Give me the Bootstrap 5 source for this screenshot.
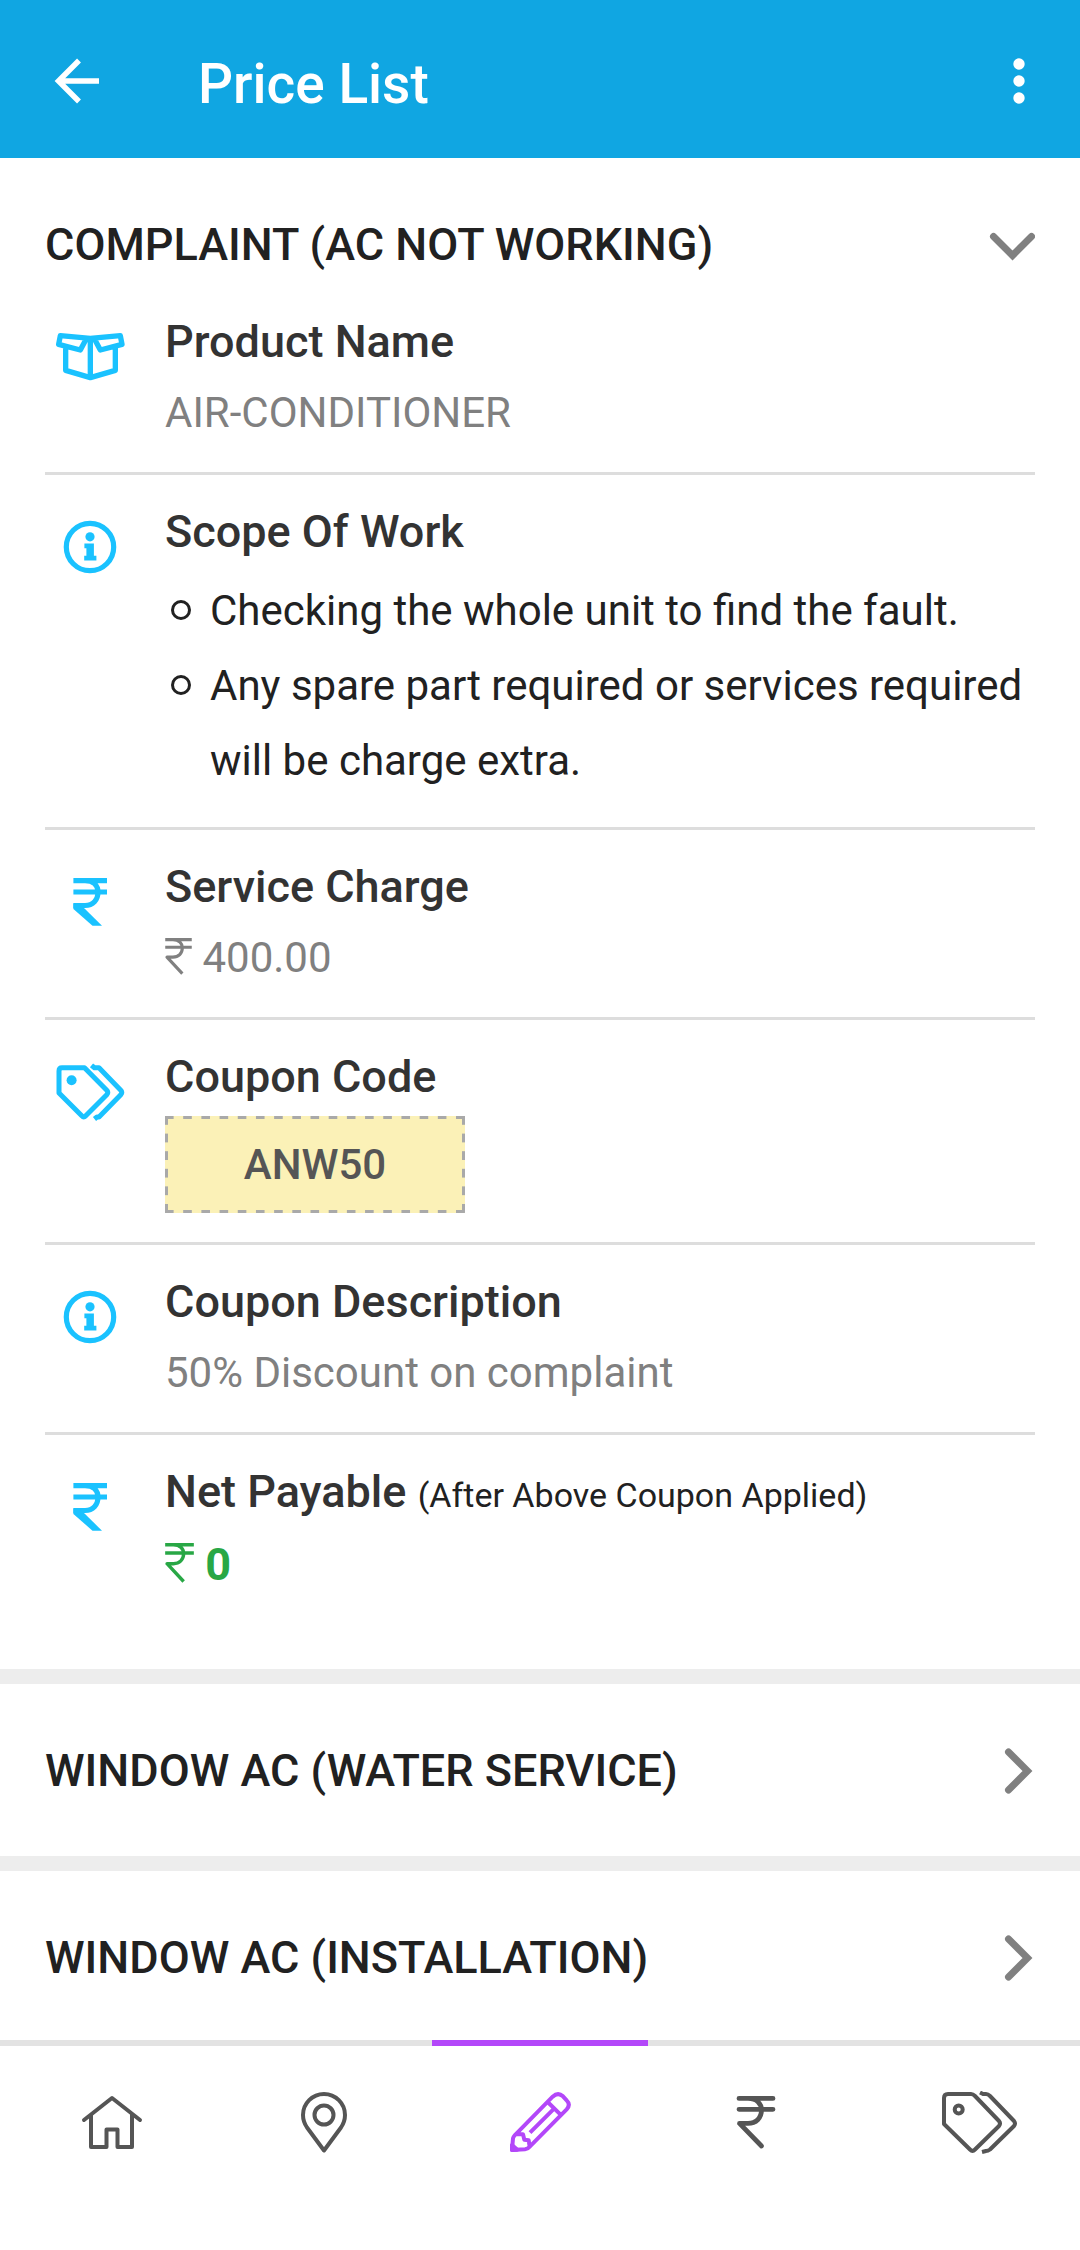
<!DOCTYPE html>
<html lang="en">
<head>
<meta charset="utf-8">
<meta name="viewport" content="width=device-width, initial-scale=1">
<title>Price List</title>
<link href="https://cdn.jsdelivr.net/npm/bootstrap@5.3.0/dist/css/bootstrap.min.css" rel="stylesheet">
<style>
body{font-family:Roboto,"Noto Sans",sans-serif;color:#212121;background:#fff;font-size:42px;line-height:60px;padding-bottom:200px}
svg{fill:none;stroke:currentColor;display:block;flex:none}
.app-bar{background:#10a6e2;height:158px;padding:4px 45px 0}
.app-bar h1{font-size:55px;line-height:64px;font-weight:500;padding:6px 0 0 90px}
.plain-btn{background:none;border:0;padding:0;color:inherit}
.price-group+.price-group{border-top:15px solid #ededed}
.group-toggle{font-size:45px;line-height:54px;font-weight:500;padding:60px 45px 58px}
.group-toggle[aria-expanded=true]{padding-bottom:13px}
.group-toggle svg{color:#808080}
.group-body{padding:0 45px 46px}
.detail{gap:30px;padding:30px 0 29px}
.detail+.detail{border-top:3px solid #ddd}
.detail>svg{color:#1ac2ff}
.detail h3{font-size:45px;line-height:54px;font-weight:500;color:#333;margin:0 0 14px}
.detail h3 span{font-size:34px;font-weight:400;color:#212121}
.detail p{margin:0;color:#808080}
.detail .net-total{font-size:45px;line-height:58px;font-weight:700;color:#28a745}
.detail p svg{display:inline;vertical-align:-3px}
.scope-list{list-style:none;padding:0;margin:0;line-height:75px}
.scope-list li{display:flex;gap:19px}
.scope-list li::before{content:"";flex:none;width:20px;height:20px;border:3px solid #212121;border-radius:50%;margin:27px 0 0 6px}
.detail .h-coupon{margin-bottom:12px}
.coupon-code{
  --dash:#a9a9a9;
  width:300px;height:97px;color:#555;font-weight:500;
  background:
    linear-gradient(90deg,var(--dash) 9px,transparent 9px) left top/calc((100% - 9px)/16) 3px repeat-x,
    linear-gradient(90deg,var(--dash) 9px,transparent 9px) left bottom/calc((100% - 9px)/16) 3px repeat-x,
    linear-gradient(var(--dash) 9px,transparent 9px) left top/3px calc((100% - 9px)/5) repeat-y,
    linear-gradient(var(--dash) 9px,transparent 9px) right top/3px calc((100% - 9px)/5) repeat-y,
    #fbf1b7;
}
.tab-bar{background:#fff;height:210px}
.tab-bar a{border-top:6px solid #e3e3e3;color:#555;padding-top:45px}
.tab-bar a.active{border-color:#b347f9;color:#b347f9}
</style>
</head>
<body>
<svg class="d-none" aria-hidden="true">
  <symbol id="i-info" viewBox="0 0 90 84"><circle cx="45" cy="42" r="23.7" stroke-width="5.2"/><circle cx="45" cy="31.8" r="4.6" fill="currentColor" stroke="none"/><path d="M39.4 38.6H48.9V50.7H51.4V55.4H39.2V50.7H41.4V43.3H39.4Z" fill="currentColor" stroke="none"/></symbol>
  <symbol id="i-rupee-bold" viewBox="0 0 90 84"><path d="M28.4 20.6H62M28.4 32H62M34 20.6H40C49 20.6 53 26 53 32C53 40 48 45.5 40 45.5H28.4" stroke-width="5.2"/><path d="M28.4 43.5V49L47.5 65.7H57L37 46Z" fill="currentColor" stroke="none"/></symbol>
  <symbol id="i-rupee" viewBox="0 0 38 53"><path d="M0 2.4H38M0 13.3H38M6 2.4H11C20 2.4 24.5 8 24.5 14C24.5 22 19 27.4 11 27.4H2.5L24.5 51" stroke-width="4.5" stroke-linejoin="round"/></symbol>
</svg>

<header class="app-bar d-flex align-items-center text-white">
  <button class="plain-btn" type="button" aria-label="Back"><svg width="63" height="50" viewBox="0 0 63 50"><path d="M34 4.500L13.500 25L34 45.500M13.500 25H54" stroke-width="5.500"/></svg></button>
  <h1 class="m-0 flex-grow-1">Price List</h1>
  <button class="plain-btn" type="button" aria-label="More options"><svg width="34" height="50" viewBox="0 0 34 50"><g fill="currentColor" stroke="none"><circle cx="18" cy="8" r="5.700"/><circle cx="18" cy="25" r="5.700"/><circle cx="18" cy="42" r="5.700"/></g></svg></button>
</header>

<main>
  <section class="price-group">
    <button class="plain-btn group-toggle w-100 d-flex justify-content-between align-items-center text-start" type="button" data-bs-toggle="collapse" data-bs-target="#complaint" aria-expanded="true" aria-controls="complaint">COMPLAINT (AC NOT WORKING)
      <svg width="46" height="46" viewBox="0 0 46 46"><path d="M4.500 14.500L23.500 33.500L42.500 14.500" stroke-width="7" stroke-linecap="round"/></svg></button>
    <div class="collapse show" id="complaint">
      <div class="group-body">
        <div class="detail d-flex align-items-start">
          <svg width="90" height="84" viewBox="0 0 90 84"><g transform="translate(5 15) scale(.33333)" stroke-width="16" stroke-linejoin="round"><path d="M121 25L31 17L26 43L91 60L109 26M121 25L211 17L216 43L151 60L133 26M121 25V143M47 50V121L121 143L196 121V50"/></g></svg>
          <div><h3>Product Name</h3><p>AIR-CONDITIONER</p></div>
        </div>
        <div class="detail d-flex align-items-start">
          <svg width="90" height="84"><use href="#i-info"/></svg>
          <div><h3>Scope Of Work</h3>
            <ul class="scope-list"><li>Checking the whole unit to find the fault.</li><li>Any spare part required or services required will be charge extra.</li></ul></div>
        </div>
        <div class="detail d-flex align-items-start">
          <svg width="90" height="84"><use href="#i-rupee-bold"/></svg>
          <div><h3>Service Charge</h3><p><svg width="27" height="37"><use href="#i-rupee"/></svg> 400.00</p></div>
        </div>
        <div class="detail d-flex align-items-start">
          <svg width="90" height="84" viewBox="0 0 90 84"><g stroke-width="5" stroke-linejoin="round"><path d="M17 17.800H39.500L62 40.500Q63.500 42.700 62 44.500L40.500 66Q38.700 68 37 66L14 43V21Q14 17.800 17 17.800Z"/><path d="M46.500 15.400L49.500 17.800H54L76 40.500Q77.500 42.700 76 44.500L54 67H52L49.500 69"/></g><circle cx="26.600" cy="30.300" r="5" fill="currentColor" stroke="none"/></svg>
          <div><h3 class="h-coupon">Coupon Code</h3><div class="coupon-code d-flex align-items-center justify-content-center">ANW50</div></div>
        </div>
        <div class="detail d-flex align-items-start">
          <svg width="90" height="84"><use href="#i-info"/></svg>
          <div><h3>Coupon Description</h3><p>50% Discount on complaint</p></div>
        </div>
        <div class="detail d-flex align-items-start">
          <svg width="90" height="84"><use href="#i-rupee-bold"/></svg>
          <div><h3>Net Payable <span>(After Above Coupon Applied)</span></h3><p class="net-total"><svg width="29" height="40"><use href="#i-rupee"/></svg> 0</p></div>
        </div>
      </div>
    </div>
  </section>
  <section class="price-group">
    <button class="plain-btn group-toggle w-100 d-flex justify-content-between align-items-center text-start" type="button" aria-expanded="false">WINDOW AC (WATER SERVICE)
      <svg width="46" height="46" viewBox="0 0 46 46"><path d="M19.500 4L38.500 23L19.500 42" stroke-width="7" stroke-linecap="round"/></svg></button>
  </section>
  <section class="price-group">
    <button class="plain-btn group-toggle w-100 d-flex justify-content-between align-items-center text-start" type="button" aria-expanded="false">WINDOW AC (INSTALLATION)
      <svg width="46" height="46" viewBox="0 0 46 46"><path d="M19.500 4L38.500 23L19.500 42" stroke-width="7" stroke-linecap="round"/></svg></button>
  </section>
</main>

<nav class="tab-bar fixed-bottom d-flex align-items-start" aria-label="Main">
  <a href="#" class="flex-fill d-flex justify-content-center" aria-label="Home"><svg width="100" height="64" viewBox="0 0 100 64"><path d="M26 29L54 7L82 29M33 24V56H48.500V38.500H59.500V56H74V24" stroke-width="4" stroke-linecap="round" stroke-linejoin="round"/></svg></a>
  <a href="#" class="flex-fill d-flex justify-content-center" aria-label="Location"><svg width="100" height="64" viewBox="0 0 100 64"><g stroke-width="4" stroke-linejoin="round"><path d="M50 59.500L33 36.500C30 32 29 28 29 24A21 21 0 0 1 71 24C71 28 70 32 67 36.500Z"/><circle cx="50" cy="24" r="9.500"/></g></svg></a>
  <a href="#" class="active flex-fill d-flex justify-content-center" aria-label="Price list" aria-current="page"><svg width="100" height="64" viewBox="0 0 100 64"><g transform="translate(0 -21) scale(.33333)" stroke-width="12" stroke-linejoin="round"><path d="M66 240L69 205Q70 200 74 196L188 80Q204 65 219 79L230 91Q243 104 230 118L120 229Q113 237 105 238ZM173 96L214 136M190 118L120 188M78 193H99L103 209L116 211L119 230"/><path d="M66 225V240L82 239Z" fill="currentColor"/></g></svg></a>
  <a href="#" class="flex-fill d-flex justify-content-center" aria-label="Payments"><svg width="100" height="64" viewBox="-31 -5 100 64"><path d="M2 2.400H36M2 13.300H36M6 2.400H11C20 2.400 24.500 8 24.500 14C24.500 22 19 27.400 11 27.400H2.500L24.500 50" stroke-width="4.800" stroke-linecap="round" stroke-linejoin="round"/></svg></a>
  <a href="#" class="flex-fill d-flex justify-content-center" aria-label="Offers"><svg width="100" height="64" viewBox="0 0 100 64"><g stroke-width="4" stroke-linejoin="round"><path d="M26 3H49Q51 3 53 5L77 30Q79 32.500 77 35L53 58.500Q50.500 61 48 58.500L22 33V7Q22 3 26 3Z"/><path d="M58 1.500L61 3H64Q66 3 68 5L92 30Q94 32.500 92 35L68 58.500Q66 60 64 60L60 61"/><circle cx="36.700" cy="18.500" r="4"/></g></svg></a>
</nav>
<script src="https://cdn.jsdelivr.net/npm/bootstrap@5.3.0/dist/js/bootstrap.bundle.min.js"></script>
</body>
</html>
